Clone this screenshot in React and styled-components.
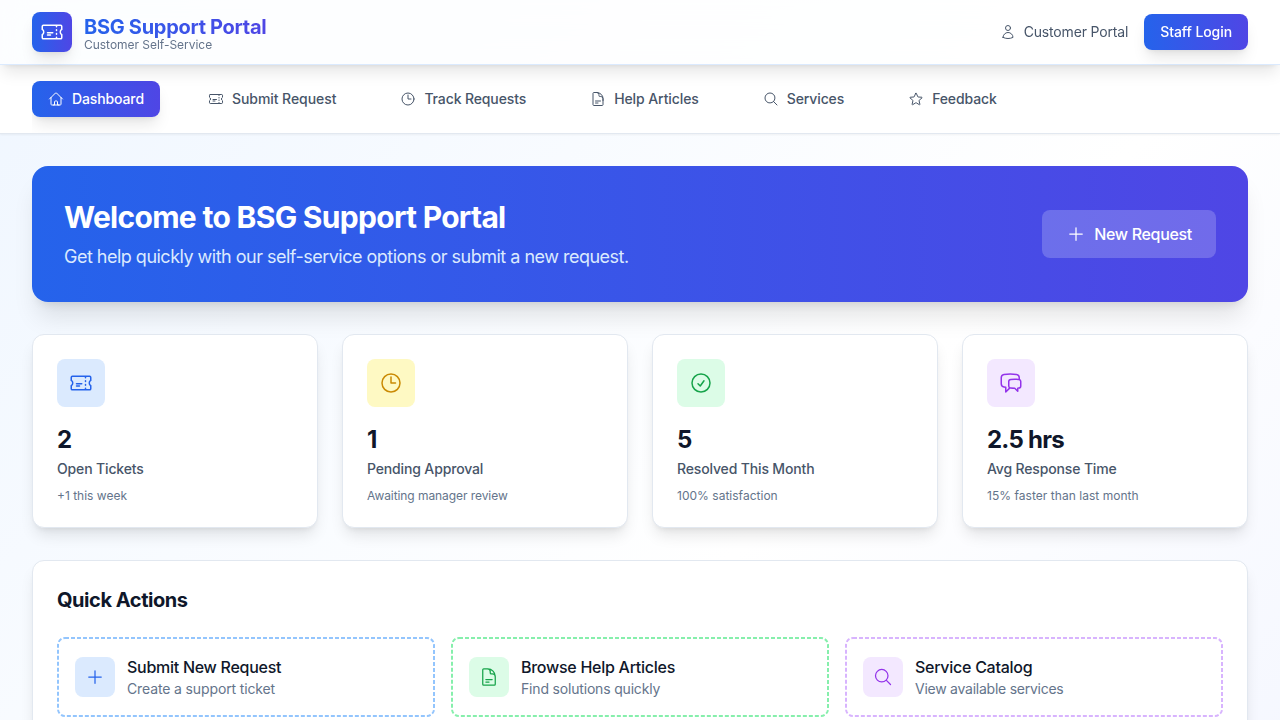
import React from "react";
import styled, { createGlobalStyle } from "styled-components";
import {
  HiOutlineTicket,
  HiOutlineHome,
  HiOutlineClock,
  HiOutlineDocumentText,
  HiOutlineMagnifyingGlass,
  HiOutlineStar,
  HiOutlineUser,
  HiOutlinePlus,
  HiOutlineCheckCircle,
  HiOutlineChatBubbleLeftRight,
} from "react-icons/hi2";

const shadowSm = "0 1px 2px 0 rgb(0 0 0 / 0.05)";
const shadowLg = "0 10px 15px -3px rgb(0 0 0 / 0.1), 0 4px 6px -4px rgb(0 0 0 / 0.1)";
const shadowXl = "0 20px 25px -5px rgb(0 0 0 / 0.1), 0 8px 10px -6px rgb(0 0 0 / 0.1)";

const tones = {
  blue: { bg: "#dbeafe", fg: "#2563eb", line: "#93c5fd" },
  yellow: { bg: "#fef9c3", fg: "#ca8a04", line: "#fde047" },
  green: { bg: "#dcfce7", fg: "#16a34a", line: "#86efac" },
  purple: { bg: "#f3e8ff", fg: "#9333ea", line: "#d8b4fe" },
};

const GlobalStyle = createGlobalStyle`
  *, *::before, *::after { box-sizing: border-box; }
  body {
    margin: 0;
    font-family: Inter, "Liberation Sans", sans-serif;
    line-height: 1.5;
    color: #0f172a;
  }
  h1, h2, h3, p { margin: 0; }
  button { font: inherit; border: 0; margin: 0; cursor: pointer; }
  svg { display: block; flex-shrink: 0; }
`;

const Page = styled.div`
  height: 100vh;
  overflow: hidden;
  background: linear-gradient(to bottom right, #eff6ff, #ffffff, #eef2ff) 0 0 / 100% 1300px no-repeat;
`;

const Header = styled.header`
  position: relative;
  z-index: 10;
  display: flex;
  align-items: center;
  justify-content: space-between;
  height: 65px;
  padding: 0 32px;
  background: rgb(255 255 255 / 0.8);
  backdrop-filter: blur(12px);
  border-bottom: 1px solid #dbeafe;
  box-shadow: ${shadowLg};
`;

const Brand = styled.div`
  display: flex;
  align-items: center;
  gap: 12px;
`;

const Logo = styled.div`
  display: flex;
  align-items: center;
  justify-content: center;
  width: 40px;
  height: 40px;
  border-radius: 8px;
  color: #fff;
  background: linear-gradient(to right, #2563eb, #4f46e5);
  box-shadow: ${shadowLg};
`;

const BrandText = styled.div`
  padding-top: 2px;
`;

const BrandName = styled.h1`
  font-size: 20px;
  line-height: 28px;
  font-weight: 700;
  letter-spacing: -0.3px;
  color: transparent;
  background: linear-gradient(to right, #2563eb, #4f46e5);
  background-clip: text;
`;

const BrandTagline = styled.p`
  margin-top: -4px;
  font-size: 12px;
  line-height: 16px;
  letter-spacing: -0.03px;
  color: #64748b;
`;

const Account = styled.div`
  display: flex;
  align-items: center;
  gap: 16px;
`;

const AccountLabel = styled.div`
  display: flex;
  align-items: center;
  gap: 8px;
  font-size: 14px;
  line-height: 20px;
  letter-spacing: -0.16px;
  color: #475569;
`;

const LoginButton = styled.button`
  padding: 8px 16px;
  border-radius: 8px;
  font-size: 14px;
  line-height: 20px;
  font-weight: 500;
  letter-spacing: -0.08px;
  color: #fff;
  background: linear-gradient(to right, #2563eb, #4f46e5);
  box-shadow: ${shadowLg};
`;

const NavBar = styled.nav`
  padding: 0 32px;
  background: #fff;
  border-bottom: 1px solid #e2e8f0;
  box-shadow: ${shadowSm};
`;

const NavList = styled.div`
  display: flex;
  gap: 32px;
  padding: 16px 0;
  overflow: hidden;
`;

const NavItem = styled.button`
  display: flex;
  align-items: center;
  gap: 8px;
  padding: 8px 16px;
  border-radius: 8px;
  font-size: 14px;
  line-height: 20px;
  font-weight: 500;
  letter-spacing: ${(p) => p.$tracking ?? -0.12}px;
  white-space: nowrap;
  color: ${(p) => (p.$active ? "#fff" : "#475569")};
  background: ${(p) => (p.$active ? "linear-gradient(to right, #2563eb, #4f46e5)" : "transparent")};
  box-shadow: ${(p) => (p.$active ? shadowLg : "none")};
`;

const Main = styled.main`
  display: flex;
  flex-direction: column;
  gap: 32px;
  padding: 32px;
`;

const Hero = styled.section`
  display: flex;
  align-items: center;
  justify-content: space-between;
  height: 136px;
  padding: 0 32px;
  border-radius: 16px;
  color: #fff;
  background: linear-gradient(to right, #2563eb, #4f46e5);
  box-shadow: ${shadowXl};
`;

const HeroCopy = styled.div`
  padding-top: 1px;
`;

const HeroTitle = styled.h2`
  margin-bottom: 8px;
  font-size: 30px;
  line-height: 36px;
  font-weight: 700;
  letter-spacing: -0.7px;
`;

const HeroText = styled.p`
  font-size: 18px;
  line-height: 28px;
  letter-spacing: -0.51px;
  color: #dbeafe;
`;

const HeroButton = styled.button`
  display: flex;
  align-items: center;
  gap: 8px;
  padding: 12px 24px;
  border-radius: 8px;
  font-size: 16px;
  line-height: 24px;
  font-weight: 500;
  letter-spacing: -0.32px;
  color: #fff;
  background: rgb(255 255 255 / 0.2);
`;

const StatGrid = styled.section`
  display: grid;
  grid-template-columns: repeat(4, 1fr);
  gap: 24px;
`;

const Card = styled.div`
  padding: 24px;
  border: 1px solid #e2e8f0;
  border-radius: 12px;
  background: #fff;
  box-shadow: ${shadowLg};
`;

const IconTile = styled.div`
  display: flex;
  align-items: center;
  justify-content: center;
  flex-shrink: 0;
  width: ${(p) => p.$size}px;
  height: ${(p) => p.$size}px;
  border-radius: 8px;
  color: ${(p) => tones[p.$tone].fg};
  background: ${(p) => tones[p.$tone].bg};
`;

const StatValue = styled.h3`
  margin-top: 17px;
  font-size: 24px;
  line-height: 32px;
  font-weight: 700;
  letter-spacing: -0.75px;
`;

const StatLabel = styled.p`
  margin-top: 3px;
  font-size: 14px;
  line-height: 20px;
  font-weight: 500;
  letter-spacing: -0.15px;
  color: #475569;
`;

const StatNote = styled.p`
  margin-top: 9px;
  margin-bottom: -1px;
  font-size: 12px;
  line-height: 16px;
  letter-spacing: ${(p) => p.$tracking ?? 0}px;
  color: #64748b;
`;

const SectionTitle = styled.h3`
  margin-top: 1px;
  margin-bottom: 23px;
  font-size: 20px;
  line-height: 28px;
  font-weight: 700;
  letter-spacing: -0.45px;
`;

const ActionGrid = styled.div`
  display: grid;
  grid-template-columns: repeat(3, 1fr);
  gap: 16px;
`;

const Action = styled.button`
  position: relative;
  display: flex;
  align-items: center;
  gap: 12px;
  padding: 18px;
  border-radius: 8px;
  text-align: left;
  background: transparent;
  color: inherit;
`;

const DashedOutline = styled.svg`
  position: absolute;
  inset: 0;
  width: 100%;
  height: 100%;
  pointer-events: none;

  rect {
    x: 1px;
    y: 1px;
    width: calc(100% - 2px);
    height: calc(100% - 2px);
    rx: 7px;
    fill: none;
    stroke: ${(p) => tones[p.$tone].line};
    stroke-width: 2px;
    stroke-dasharray: 4 2;
  }
`;

const ActionTitle = styled.p`
  font-size: 16px;
  line-height: 24px;
  font-weight: 500;
  letter-spacing: -0.27px;
  color: #0f172a;
`;

const ActionText = styled.p`
  font-size: 14px;
  line-height: 20px;
  letter-spacing: ${(p) => p.$tracking}px;
  color: #64748b;
`;

const navItems = [
  { label: "Dashboard", Icon: HiOutlineHome, active: true },
  { label: "Submit Request", Icon: HiOutlineTicket, tracking: -0.06 },
  { label: "Track Requests", Icon: HiOutlineClock },
  { label: "Help Articles", Icon: HiOutlineDocumentText, tracking: -0.09 },
  { label: "Services", Icon: HiOutlineMagnifyingGlass },
  { label: "Feedback", Icon: HiOutlineStar },
];

const stats = [
  { value: "2", label: "Open Tickets", note: "+1 this week", tone: "blue", Icon: HiOutlineTicket },
  { value: "1", label: "Pending Approval", note: "Awaiting manager review", tracking: -0.07, tone: "yellow", Icon: HiOutlineClock },
  { value: "5", label: "Resolved This Month", note: "100% satisfaction", tracking: 0.02, tone: "green", Icon: HiOutlineCheckCircle },
  { value: "2.5 hrs", label: "Avg Response Time", note: "15% faster than last month", tracking: 0.04, tone: "purple", Icon: HiOutlineChatBubbleLeftRight },
];

const actions = [
  { title: "Submit New Request", text: "Create a support ticket", tracking: -0.13, tone: "blue", Icon: HiOutlinePlus },
  { title: "Browse Help Articles", text: "Find solutions quickly", tracking: -0.18, tone: "green", Icon: HiOutlineDocumentText },
  { title: "Service Catalog", text: "View available services", tracking: -0.25, tone: "purple", Icon: HiOutlineMagnifyingGlass },
];

export default function App() {
  return (
    <Page>
      <GlobalStyle />
      <Header>
        <Brand>
          <Logo>
            <HiOutlineTicket size={24} />
          </Logo>
          <BrandText>
            <BrandName>BSG Support Portal</BrandName>
            <BrandTagline>Customer Self-Service</BrandTagline>
          </BrandText>
        </Brand>
        <Account>
          <AccountLabel>
            <HiOutlineUser size={16} />
            <span>Customer Portal</span>
          </AccountLabel>
          <LoginButton>Staff Login</LoginButton>
        </Account>
      </Header>
      <NavBar>
        <NavList>
          {navItems.map(({ label, Icon, active, tracking }) => (
            <NavItem key={label} $active={active} $tracking={tracking}>
              <Icon size={16} />
              <span>{label}</span>
            </NavItem>
          ))}
        </NavList>
      </NavBar>
      <Main>
        <Hero>
          <HeroCopy>
            <HeroTitle>Welcome to BSG Support Portal</HeroTitle>
            <HeroText>Get help quickly with our self-service options or submit a new request.</HeroText>
          </HeroCopy>
          <HeroButton>
            <HiOutlinePlus size={20} />
            <span>New Request</span>
          </HeroButton>
        </Hero>
        <StatGrid>
          {stats.map(({ value, label, note, tracking, tone, Icon }) => (
            <Card key={label}>
              <IconTile $size={48} $tone={tone}>
                <Icon size={24} />
              </IconTile>
              <StatValue>{value}</StatValue>
              <StatLabel>{label}</StatLabel>
              <StatNote $tracking={tracking}>{note}</StatNote>
            </Card>
          ))}
        </StatGrid>
        <Card>
          <SectionTitle>Quick Actions</SectionTitle>
          <ActionGrid>
            {actions.map(({ title, text, tracking, tone, Icon }) => (
              <Action key={title}>
                <DashedOutline $tone={tone} aria-hidden="true">
                  <rect />
                </DashedOutline>
                <IconTile $size={40} $tone={tone}>
                  <Icon size={20} />
                </IconTile>
                <div>
                  <ActionTitle>{title}</ActionTitle>
                  <ActionText $tracking={tracking}>{text}</ActionText>
                </div>
              </Action>
            ))}
          </ActionGrid>
        </Card>
      </Main>
    </Page>
  );
}
